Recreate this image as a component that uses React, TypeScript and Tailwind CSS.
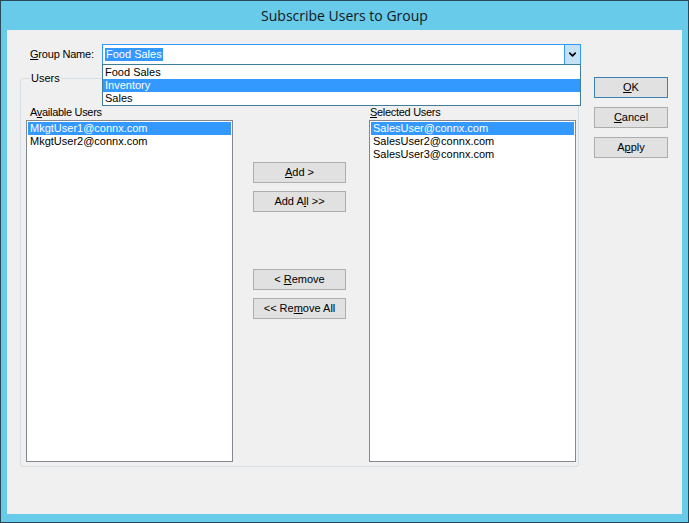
import { ChevronDown } from "lucide-react";

const ui = { fontFamily: '"Liberation Sans", Arial, sans-serif' };

function Btn({ children, w = "w-[93px]", def = false }: { children: React.ReactNode; w?: string; def?: boolean }) {
  return (
    <button
      className={`${w} h-[21px] border ${def ? "border-[#3c7fb1]" : "border-[#adadad]"} bg-[#e1e1e1] text-[11px] text-black leading-none`}
    >
      {children}
    </button>
  );
}

function ListBox({ items }: { items: string[] }) {
  return (
    <div className="flex-1 border border-[#828790] bg-white p-[1px]">
      {items.map((it, i) => (
        <div
          key={it}
          className={`h-[13px] pl-[2px] text-[11px] leading-[13px] ${i === 0 ? "bg-[#3399ff] text-white" : "text-black"}`}
        >
          {it}
        </div>
      ))}
    </div>
  );
}

export default function App() {
  return (
    <div style={ui} className="w-[689px] h-[523px] bg-[#68cbea] border border-[#2a4858] flex flex-col">
      <div className="h-[29px] flex items-center justify-center text-[14px] text-[#101820]" style={{ fontFamily: '"Open Sans", sans-serif' }}>
        Subscribe Users to Group
      </div>
      <div className="mx-[6px] mb-[8px] flex-1 bg-[#f0f0f0] relative">
        {/* group name row */}
        <div className="flex items-center mt-[14px] h-[20px]">
          <span className="ml-[23px] w-[72px] text-[11px] tracking-[-0.2px]">
            <u>G</u>roup Name:
          </span>
          <div className="w-[479px] h-[21px] border border-[#3399ff] bg-white flex items-center relative">
            <span className="ml-[2px] px-[1px] bg-[#3399ff] text-white text-[11px] leading-[13px]">Food Sales</span>
            <div className="absolute right-0 top-0 bottom-0 w-[16px] bg-[#c5e1f6] border-l border-[#3399ff] flex items-center justify-center">
              <ChevronDown size={11} strokeWidth={3.5} className="text-black" />
            </div>
          </div>
        </div>
        {/* dropdown list */}
        <div className="absolute left-[95px] top-[34px] w-[479px] h-[42px] border border-[#3f7e98] bg-white z-10 pt-[1px]">
          <div className="h-[13px] pl-[2px] text-[11px] leading-[13px]">Food Sales</div>
          <div className="h-[13px] pl-[2px] text-[11px] leading-[13px] bg-[#3399ff] text-white">Inventory</div>
          <div className="h-[13px] pl-[2px] text-[11px] leading-[13px]">Sales</div>
        </div>

        <div className="flex mt-[8px]">
          <fieldset className="ml-[13px] w-[559px] min-w-0 h-[395px] border border-[#d5dfe5] rounded-[3px] px-[5px] pb-[4px] flex">
            <legend className="ml-[4px] px-[1px] text-[11px] leading-[13px]">Users</legend>
            <div className="flex flex-1 mt-[21px]">
              <div className="w-[207px] flex flex-col">
                <div className="text-[11px] leading-[13px] ml-[4px] mb-[1px] tracking-[-0.3px]">
                  A<u>v</u>ailable Users
                </div>
                <ListBox items={["MkgtUser1@connx.com", "MkgtUser2@connx.com"]} />
              </div>
              <div className="ml-[20px] w-[93px] flex flex-col pt-[56px]">
                <Btn>
                  <u>A</u>dd &gt;
                </Btn>
                <div className="h-[8px]" />
                <Btn>
                  Add A<u>l</u>l &gt;&gt;
                </Btn>
                <div className="h-[57px]" />
                <Btn>
                  &lt; <u>R</u>emove
                </Btn>
                <div className="h-[8px]" />
                <Btn>
                  &lt;&lt; Re<u>m</u>ove All
                </Btn>
              </div>
              <div className="ml-[23px] w-[207px] flex flex-col">
                <div className="text-[11px] leading-[13px] ml-[1px] mb-[1px] tracking-[-0.3px]">
                  <u>S</u>elected Users
                </div>
                <ListBox items={["SalesUser@connx.com", "SalesUser2@connx.com", "SalesUser3@connx.com"]} />
              </div>
            </div>
          </fieldset>
          <div className="ml-[15px] mt-[5px] flex flex-col gap-[9px]">
            <Btn w="w-[74px]" def>
              <u>O</u>K
            </Btn>
            <Btn w="w-[74px]">
              <u>C</u>ancel
            </Btn>
            <Btn w="w-[74px]">
              A<u>p</u>ply
            </Btn>
          </div>
        </div>
      </div>
    </div>
  );
}
